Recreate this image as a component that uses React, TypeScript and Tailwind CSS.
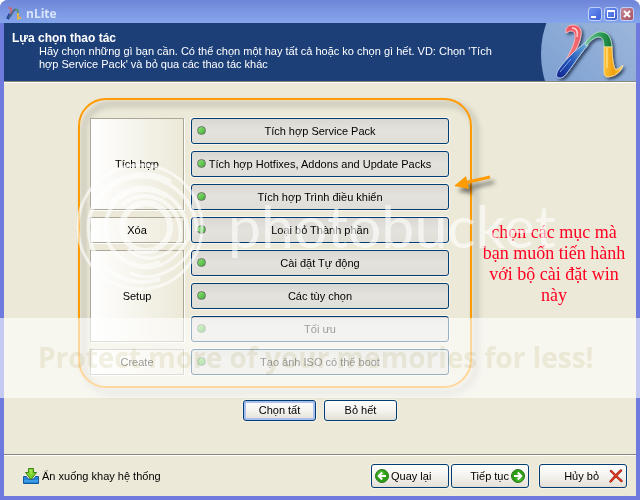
import type { ReactNode } from "react";

type Task = { label: string };
type Group = { name: string; rows: string; tasks: Task[] };

const groups: Group[] = [
  {
    name: "Tích hợp",
    rows: "row-span-3",
    tasks: [
      { label: "Tích hợp Service Pack" },
      { label: "Tích hợp Hotfixes, Addons and Update Packs" },
      { label: "Tích hợp Trình điều khiển" },
    ],
  },
  { name: "Xóa", rows: "row-span-1", tasks: [{ label: "Loại bỏ Thành phần" }] },
  {
    name: "Setup",
    rows: "row-span-3",
    tasks: [
      { label: "Cài đặt Tự động" },
      { label: "Các tùy chọn" },
      { label: "Tối ưu" },
    ],
  },
  {
    name: "Create",
    rows: "row-span-1",
    tasks: [{ label: "Tạo ảnh ISO có thể boot" }],
  },
];

function SmallLogo() {
  return (
    <svg width="16" height="16" viewBox="0 0 16 16" fill="none" strokeWidth="2">
      <path d="M2.5 2.5C5 1 6 3 5 6L4 9" stroke="#c8687c" />
      <path d="M4 8L1.5 13" stroke="#24469e" strokeWidth="3" />
      <path d="M3 12C6 8 7 3.500 9.500 3.500" stroke="#4a6a8a" />
      <path d="M9 3.500C11 3 12 4 12 7" stroke="#5a9277" />
      <path d="M12 7V12.500L15 11.500" stroke="#e0b545" />
    </svg>
  );
}

function BigLogo() {
  return (
    <svg width="96" height="58" viewBox="0 0 96 58" className="shrink-0">
      <defs>
        <linearGradient id="disc" x1="1" y1="0" x2="0" y2="1">
          <stop offset="0" stopColor="#b4c7e2" />
          <stop offset="0.5" stopColor="#96b1d8" />
          <stop offset="1" stopColor="#6f98cf" />
        </linearGradient>
        <linearGradient id="red" x1="0" y1="0" x2="0" y2="1">
          <stop offset="0" stopColor="#ee5560" />
          <stop offset="1" stopColor="#f4777b" />
        </linearGradient>
        <linearGradient id="blue" x1="0" y1="1" x2="1" y2="0">
          <stop offset="0" stopColor="#12248c" />
          <stop offset="0.45" stopColor="#2453b8" />
          <stop offset="1" stopColor="#6bb2df" />
        </linearGradient>
        <linearGradient id="green" x1="0" y1="0" x2="1" y2="0">
          <stop offset="0" stopColor="#7cc6a4" />
          <stop offset="0.6" stopColor="#2f9c58" />
          <stop offset="1" stopColor="#157535" />
        </linearGradient>
        <linearGradient id="gold" x1="0" y1="0" x2="1" y2="0">
          <stop offset="0" stopColor="#ffc338" />
          <stop offset="0.5" stopColor="#f0a010" />
          <stop offset="1" stopColor="#ffd85c" />
        </linearGradient>
        <filter id="soft" x="-20%" y="-20%" width="150%" height="150%">
          <feDropShadow dx="2" dy="2" stdDeviation="1.4" floodColor="#14223c" floodOpacity="0.75" />
        </filter>
      </defs>
      <circle cx="93" cy="31" r="92" fill="url(#disc)" />
      <g filter="url(#soft)" strokeWidth="0.8" strokeLinejoin="round">
        <path d="M26 10C25 5 28 2 33 2C39 2 42 6 41 12C40 21 35 29 29 38L26 37C31 27 35 20 35 13C35 9 33 8 31 8C29 8 28 9 26 10Z" fill="url(#red)" stroke="#ffc9cb" />
        <path d="M27 36L34 29L46 19L48 22C40 31 34 41 27 50C24 55 19 56 17 54C15 50 20 44 27 36Z" fill="url(#blue)" stroke="#c8def6" />
        <path d="M45 20C51 12 57 8 62 9C69 10 71 15 72 24H64C64 17 62 14 59 14C55 14 51 17 46 23Z" fill="url(#green)" stroke="#b8e6c9" />
        <path d="M64 24H72C72 33 73 41 75 46C77 47 80 45 83 42C81 49 76 53 68 54C65 54 64 52 64 48Z" fill="url(#gold)" stroke="#ffe6a0" />
        <path d="M32 5C37 5 38 9 37 14" stroke="#ffd5d7" fill="none" strokeWidth="1.500" />
        <path d="M20 49L31 36" stroke="#7fa5ef" fill="none" strokeWidth="1" />
        <path d="M67 25V45" stroke="#ffe28a" fill="none" strokeWidth="1.300" />
      </g>
    </svg>
  );
}

function TrayIcon() {
  return (
    <svg width="16" height="16" viewBox="0 0 16 16">
      <path d="M.5 8.500H3.500L5 11H11L12.500 8.500H15.500V15.500H.5Z" fill="#2486d8" stroke="#14589c" />
      <path d="M1 13H15" stroke="#56b4f4" />
      <path d="M5.500.5H10.500V4.500H13.500L8 11.500L2.500 4.500H5.500Z" fill="#7cd32c" stroke="#3c8412" />
      <path d="M6.500 2H8V6" stroke="#b4f070" fill="none" />
    </svg>
  );
}

function ArrowBall({ flip }: { flip?: boolean }) {
  return (
    <svg width="14" height="14" viewBox="0 0 14 14" className={flip ? "rotate-180" : ""}>
      <circle cx="7" cy="7" r="6.500" fill="#2f9e17" stroke="#2b7a1a" />
      <circle cx="6" cy="5" r="3.500" fill="#58c03a" opacity="0.6" />
      <path d="M11 7H4M7.200 3.500L3.700 7L7.200 10.500" stroke="#fff" strokeWidth="2" fill="none" />
    </svg>
  );
}

function CrossIcon() {
  return (
    <svg width="14" height="14" viewBox="0 0 14 14" fill="none" strokeLinecap="round">
      <path d="M2 2C5 5 9 9 12.500 12M12 1.500C8 5 5 9 1.500 12.500" stroke="#8d1d12" strokeWidth="2.400" />
      <path d="M2 2C5 5 9 9 12.500 12M12 1.500C8 5 5 9 1.500 12.500" stroke="#e23a22" strokeWidth="1.500" />
    </svg>
  );
}

function CaptionButton({ label, tone, children }: { label: string; tone: string; children: ReactNode }) {
  return (
    <button
      type="button"
      aria-label={label}
      className={`flex size-[14px] items-center justify-center rounded-[3px] border border-[#c3d0f5] bg-linear-to-br ${tone}`}
    >
      <svg width="10" height="10" viewBox="0 0 10 10" fill="none" stroke="#fff">
        {children}
      </svg>
    </button>
  );
}

function PushButton({ className, children }: { className: string; children: ReactNode }) {
  return (
    <button
      type="button"
      className={`flex items-center rounded-[3px] border border-[#003c74] bg-linear-to-b from-white via-[#f4f3ee] to-[#e3e0d6] shadow-[0_0_0_1px_#f4f2e8] ${className}`}
    >
      {children}
    </button>
  );
}

function TaskButton({ label }: Task) {
  return (
    <button
      type="button"
      className="relative flex h-[26px] items-center justify-center rounded-[3px] border border-[#003c74] bg-linear-to-b from-[#d9d8d2] via-[#e3e2dc] to-[#dfded7] shadow-[0_0_0_1px_#f7f5ec]"
    >
      <span className="absolute top-[7px] left-[5px] size-[9px] rounded-full border border-[#6a7468] bg-linear-to-br from-[#8be478] to-[#3fae30]" />
      {label}
    </button>
  );
}

function Watermark() {
  return (
    <div className="pointer-events-none absolute inset-0 overflow-hidden">
      <svg
        className="absolute top-[163px] left-[76px] opacity-60"
        width="128"
        height="128"
        viewBox="0 0 128 128"
        fill="none"
        stroke="#fff"
      >
        <circle cx="64" cy="64" r="62" strokeWidth="3" />
        <path d="M95 19A54 54 0 1 0 84 116" strokeWidth="4" />
        <path d="M90 34A38 38 0 1 0 84 99" strokeWidth="4" />
        <circle cx="70" cy="64" r="24" strokeWidth="6" />
        <path d="M24 34C46 8 78 8 100 26C112 36 120 50 121 68" strokeWidth="4" />
        <path d="M34 40C54 18 80 22 96 36C108 47 113 62 112 76" strokeWidth="4" />
        <path d="M46 42C62 28 82 32 94 44C104 54 106 68 103 82" strokeWidth="4" />
        <path d="M52 86C68 102 90 96 103 78M50 98C70 112 96 104 112 76M54 110C76 120 104 108 118 82" strokeWidth="3" />
      </svg>
      <span className="absolute top-[192px] left-[228px] font-['Lato'] text-[59px] leading-[68px] text-white/60">
        photobucket
      </span>
      <div className="absolute inset-x-0 top-[318px] h-[80px] bg-white/60" />
      <span className="absolute top-[338px] left-[38px] font-['Open_Sans'] text-[28px] leading-[38px] font-bold whitespace-nowrap text-[#f3f1e4] mix-blend-multiply">
        Protect more of your memories for less!
      </span>
    </div>
  );
}

export default function App() {
  return (
    <div className="relative flex min-h-screen flex-col overflow-hidden rounded-t-lg bg-[#7b86de] font-['Liberation_Sans',sans-serif] text-[11px] leading-[13px] text-black">
      <div className="flex h-[23px] items-center bg-linear-to-b from-[#6f85d8] via-[#7b97e2] to-[#83a5ea] pt-1 pr-[6px] pl-[6px]">
        <SmallLogo />
        <h1 className="ml-1 flex-1 font-['Open_Sans'] text-[12px] font-bold text-[#d8e4f8]">nLite</h1>
        <div className="flex gap-[2px]">
          <CaptionButton label="Minimize" tone="from-[#6f92ee] to-[#3a5fdc]">
            <path d="M1 8H6" strokeWidth="2" />
          </CaptionButton>
          <CaptionButton label="Maximize" tone="from-[#6f92ee] to-[#3a5fdc]">
            <path d="M1.500 2.500H8.500V8.500H1.500Z" />
            <path d="M1 2H9" strokeWidth="2" />
          </CaptionButton>
          <CaptionButton label="Close" tone="from-[#c58a9c] to-[#a8505f]">
            <path d="M2 2L8 8M8 2L2 8" strokeWidth="2" />
          </CaptionButton>
        </div>
      </div>

      <div className="flex flex-1 flex-col border-x-4 border-b-4 border-[#6f7ade] bg-[#ece9d8]">
        <header className="flex h-[58px] bg-[#1c3f78] text-white">
          <div className="flex-1 pt-2 pl-2">
            <h2 className="text-[12px] leading-[14px] font-bold">Lựa chọn thao tác</h2>
            <p className="w-[500px] pl-[27px]">
              Hãy chọn những gì bạn cần. Có thể chọn một hay tất cả hoặc ko chọn gì hết. VD: Chọn 'Tích
              <br />
              hợp Service Pack' và bỏ qua các thao tác khác
            </p>
          </div>
          <BigLogo />
        </header>
        <div className="h-[2px] border-t border-[#8b8778] bg-white" />

        <main className="flex-1 pt-[15px]">
          <div className="flex pl-[74px]">
            <section className="relative pt-5 pr-[23px] pb-[13px] pl-3">
              <div className="absolute inset-0 rounded-[28px] border-2 border-[#ff9b05] drop-shadow-[5px_5px_3px_rgba(0,0,0,0.4)]" />
              <div className="relative grid grid-cols-[94px_258px] gap-[7px]">
                {groups.map((group) => (
                  <div key={group.name} className="contents">
                    <h3
                      className={`flex items-center justify-center border border-[#aca899] bg-linear-to-r from-white to-[#ece9d8] shadow-[1px_1px_0_#fff] ${group.rows}`}
                    >
                      {group.name}
                    </h3>
                    {group.tasks.map((task) => (
                      <TaskButton key={task.label} label={task.label} />
                    ))}
                  </div>
                ))}
              </div>
              <svg
                className="absolute top-[76px] left-[374px] drop-shadow-[4px_5px_2px_rgba(0,0,0,0.5)]"
                width="40"
                height="18"
                viewBox="0 0 40 18"
              >
                <path d="M38 3L12 9" stroke="#ff9b05" strokeWidth="3" />
                <path d="M2 12L14 2L17 15Z" fill="#ff9b05" />
              </svg>
            </section>
            <p className="flex-1 pt-[124px] text-center font-['Liberation_Serif',serif] text-[18px] leading-[21px] text-[#ff0022]">
              <span className="block">chọn các mục mà</span>
              <span className="block">bạn muốn tiến hành</span>
              <span className="block">với bộ cài đặt win</span>
              <span className="block">này</span>
            </p>
          </div>
          <div className="mt-3 flex gap-2 pl-[239px]">
            <PushButton className="h-[21px] w-[73px] justify-center inset-shadow-[0_0_0_2px_#a9c0ee]">Chọn tất</PushButton>
            <PushButton className="h-[21px] w-[73px] justify-center">Bỏ hết</PushButton>
          </div>
        </main>

        <div className="h-[2px] border-t border-[#8b8778] bg-white" />
        <footer className="flex h-[40px] items-center pr-[9px] pl-[19px]">
          <button type="button" className="flex items-center gap-[3px]">
            <TrayIcon />
            Ẩn xuống khay hệ thống
          </button>
          <div className="ml-auto flex gap-[2px]">
            <PushButton className="h-6 w-[78px] gap-[2px] pl-[3px]">
              <ArrowBall />
              Quay lại
            </PushButton>
            <PushButton className="h-6 w-[78px] justify-end gap-[2px] pr-[3px]">
              Tiếp tục
              <ArrowBall flip />
            </PushButton>
          </div>
          <PushButton className="ml-[10px] h-6 w-[88px] justify-end gap-[10px] pr-[3px]">
            Hủy bỏ
            <CrossIcon />
          </PushButton>
        </footer>
      </div>

      <Watermark />
    </div>
  );
}
